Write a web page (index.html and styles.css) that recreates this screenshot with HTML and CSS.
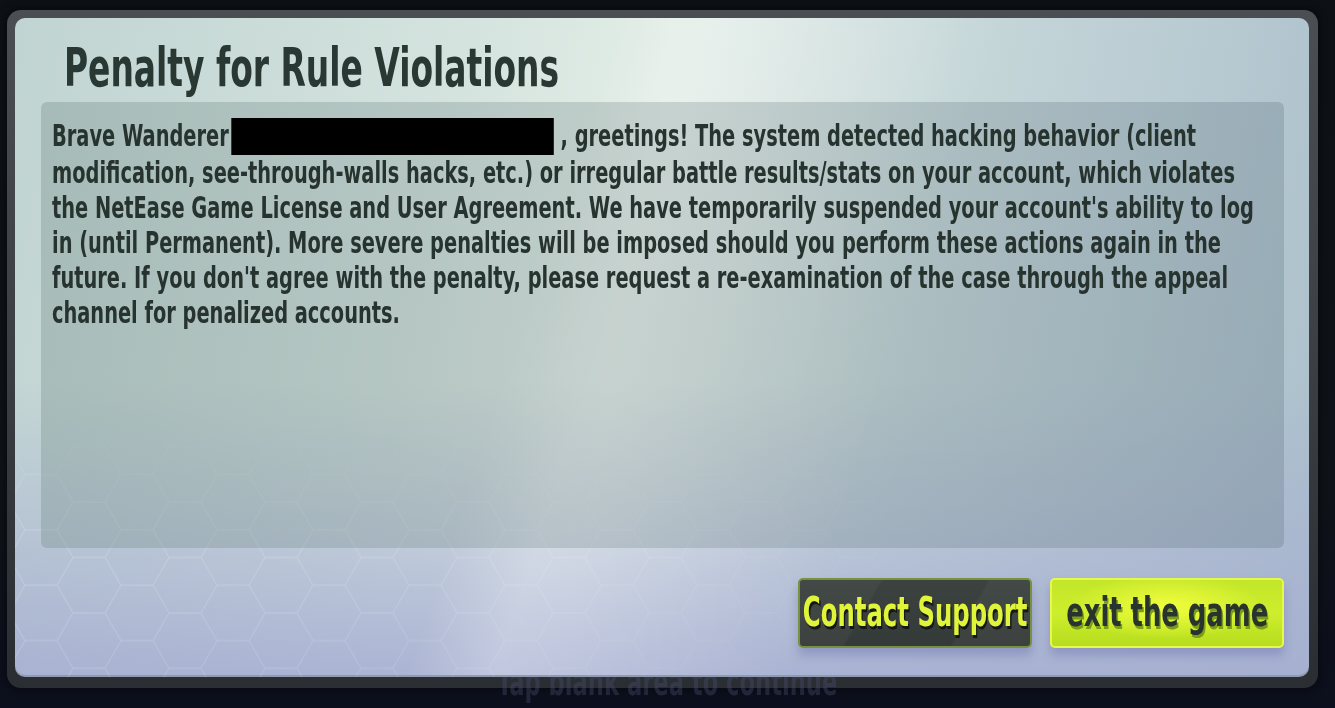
FILE: index.html
```html
<!DOCTYPE html>
<html lang="en">
<head>
    <meta charset="UTF-8">
    <meta name="viewport" content="width=device-width, initial-scale=1.0">
    <title>Penalty for Rule Violations</title>
    <link rel="stylesheet" href="styles.css">
</head>
<body>
    <div class="frame">
        <div class="panel">
            <svg class="hex-bg" width="1293" height="260" aria-hidden="true">
                <defs>
                    <pattern id="hex" width="96" height="55.4" patternUnits="userSpaceOnUse" x="-6" y="2">
                        <path d="M16 0 L48 0 L64 27.7 L48 55.4 L16 55.4 L0 27.7 Z M64 27.7 L96 27.7" fill="none" stroke="#ffffff" stroke-width="1.3"/>
                    </pattern>
                    <linearGradient id="fadeX" x1="0" y1="0" x2="1" y2="0.35">
                        <stop offset="0" stop-color="#fff" stop-opacity="1"/>
                        <stop offset="0.55" stop-color="#fff" stop-opacity="0.55"/>
                        <stop offset="0.85" stop-color="#fff" stop-opacity="0"/>
                    </linearGradient>
                    <linearGradient id="fadeY" x1="0" y1="0" x2="0" y2="1">
                        <stop offset="0" stop-color="#fff" stop-opacity="0"/>
                        <stop offset="0.45" stop-color="#fff" stop-opacity="1"/>
                    </linearGradient>
                    <mask id="maskY">
                        <rect width="1293" height="260" fill="url(#fadeY)"/>
                    </mask>
                    <mask id="hexMask">
                        <rect width="1293" height="260" fill="url(#fadeX)" mask="url(#maskY)"/>
                    </mask>
                </defs>
                <rect width="1293" height="260" fill="url(#hex)" mask="url(#hexMask)" opacity="0.2"/>
            </svg>

            <h1 class="title"><span class="cond">Penalty for Rule Violations</span></h1>

            <div class="message">
                <p>Brave Wanderer <span class="redacted"></span> , greetings! The system detected hacking behavior (client<br>
                modification, see-through-walls hacks, etc.) or irregular battle results/stats on your account, which violates<br>
                the NetEase Game License and User Agreement. We have temporarily suspended your account's ability to log<br>
                in (until Permanent). More severe penalties will be imposed should you perform these actions again in the<br>
                future. If you don't agree with the penalty, please request a re-examination of the case through the appeal<br>
                channel for penalized accounts.</p>
            </div>

            <div class="actions">
                <button class="btn btn-dark"><span class="cond">Contact Support</span></button>
                <button class="btn btn-lime"><span class="cond">exit the game</span></button>
            </div>
        </div>
        <div class="hint"><span class="cond">Tap blank area to continue</span></div>
    </div>
</body>
</html>
```

FILE: styles.css
```css
body {
    margin: 0;
    width: 1335px;
    height: 708px;
    overflow: hidden;
    background: linear-gradient(180deg, #0d1014 0%, #0f1218 70%, #0c0f1d 100%);
    font-family: "DejaVu Sans Condensed", "DejaVu Sans", sans-serif;
    font-stretch: condensed;
    color: #26322f;
}

/* the game uses a tall narrow face, squeeze the closest one we have */
.cond {
    display: inline-block;
    white-space: nowrap;
    transform: scaleX(0.68);
}

.frame {
    position: relative;
    margin: 10px 0 0 7px;
    width: 1311px;
    height: 678px;
    box-sizing: border-box;
    padding: 8px 9px 11px 8px;
    border-radius: 14px;
    background: linear-gradient(180deg, #4b4e52 0%, #3c3f44 50%, #2a2d32 100%);
    box-shadow: 0 0 10px rgba(0, 0, 0, 0.6);
}

.panel {
    position: relative;
    z-index: 3;
    height: 100%;
    box-sizing: border-box;
    padding: 0 25px 0 26px;
    border-radius: 10px;
    overflow: hidden;
    display: flex;
    flex-direction: column;
    box-shadow: inset 0 -2px 0 #8f9cb0;
    background:
        linear-gradient(108deg, rgba(255, 255, 255, 0) 40%, rgba(255, 255, 255, 0.25) 46%, rgba(255, 255, 255, 0.1) 58%, rgba(255, 255, 255, 0) 66%),
        linear-gradient(180deg, rgba(168, 176, 210, 0) 55%, rgba(166, 174, 210, 0.9) 100%),
        linear-gradient(100deg, #c0d4d2 0%, #d4e3de 32%, #e3ede7 47%, #c6d7d9 68%, #abbfcb 100%);
}

.hex-bg {
    position: absolute;
    left: 0;
    bottom: 0;
}

.title {
    position: relative;
    margin: 0;
    height: 84px;
    box-sizing: border-box;
    padding: 20px 0 0 23px;
    font-size: 53px;
    font-weight: bold;
    line-height: 60px;
    color: #2a3834;
}

.title .cond {
    transform: scaleX(0.69);
    transform-origin: 0 0;
}

.message {
    position: relative;
    height: 446px;
    box-sizing: border-box;
    padding: 16px 11px;
    border-radius: 6px;
    background: linear-gradient(100deg, rgba(118, 142, 138, 0.36) 0%, rgba(120, 140, 140, 0.3) 50%, rgba(108, 128, 142, 0.36) 100%);
}

.message p {
    margin: 0;
    font-size: 31px;
    font-weight: bold;
    line-height: 35px;
    white-space: nowrap;
    color: #27332f;
    transform: scaleX(0.695);
    transform-origin: 0 0;
}

.redacted {
    display: inline-block;
    width: 464px;
    height: 37px;
    margin-left: -6px;
    background: #000;
    vertical-align: top;
}

.actions {
    position: relative;
    display: flex;
    justify-content: flex-end;
    gap: 18px;
    margin-top: 30px;
}

.btn {
    display: flex;
    align-items: center;
    justify-content: center;
    width: 234px;
    height: 70px;
    border-radius: 5px;
    font-family: inherit;
    font-size: 41px;
    font-weight: bold;
    padding: 0 0 2px;
    cursor: pointer;
    box-shadow: 0 7px 10px rgba(90, 96, 160, 0.35);
}

.btn-dark {
    background:
        linear-gradient(120deg, rgba(255, 255, 255, 0.04) 30%, rgba(255, 255, 255, 0) 31%, rgba(255, 255, 255, 0) 70%, rgba(255, 255, 255, 0.04) 71%),
        linear-gradient(180deg, #3c4240 0%, #343a38 100%);
    border: 2px solid #78913f;
    color: #e0f53a;
    text-shadow: 2px 3px 0 #141917;
}

.btn-dark .cond {
    transform: scaleX(0.66);
}

.btn-lime {
    background:
        radial-gradient(ellipse 60% 70% at 50% 40%, #f0fd3c 0%, rgba(236, 252, 50, 0) 70%),
        linear-gradient(180deg, #c2e62a 0%, #cdee2c 50%, #b6dd1e 100%);
    border: 2px solid #e6f84c;
    color: #29342f;
    text-shadow: 2px 3px 0 #7c9c1c;
}

.btn-lime .cond {
    transform: scaleX(0.7);
}

.hint {
    position: absolute;
    z-index: 2;
    left: -7px;
    width: 1335px;
    top: 648px;
    text-align: center;
    font-size: 37px;
    font-weight: bold;
    line-height: 50px;
    color: rgba(72, 80, 112, 0.38);
}
```
